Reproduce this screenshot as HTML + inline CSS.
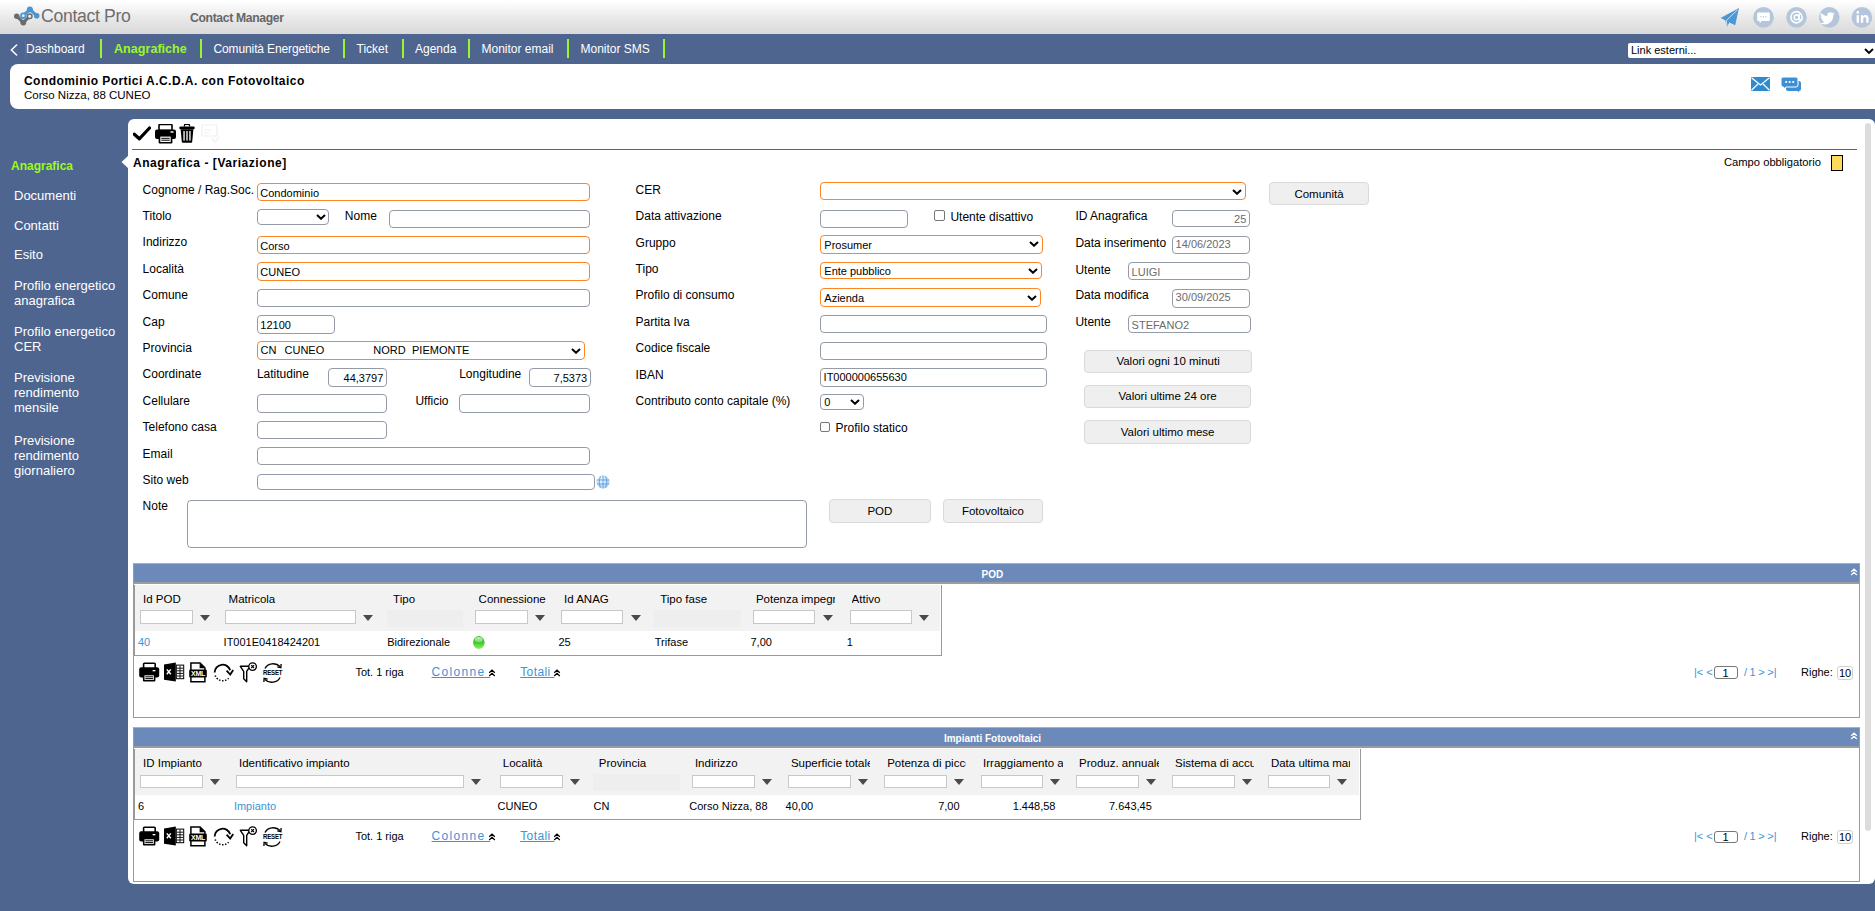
<!DOCTYPE html>
<html><head><meta charset="utf-8">
<style>
*{box-sizing:border-box;margin:0;padding:0}
html,body{width:1875px;height:911px;overflow:hidden}
body{position:relative;background:#4e6590;font-family:"Liberation Sans",sans-serif;color:#000}
.a{position:absolute;white-space:nowrap}
#hdr{position:absolute;left:0;top:0;width:1875px;height:34px;background:linear-gradient(#ffffff 0%,#fdfdfd 8%,#e8e8e8 55%,#d9d9d9 100%)}
.nav{position:absolute;top:42px;font-size:12px;color:#fff;line-height:14px;white-space:nowrap}
.sep{position:absolute;top:39px;width:2px;height:19px;background:#9bf826}
#card{position:absolute;left:10px;top:64px;width:1865px;height:45.3px;background:#fff;border-radius:8px 0 0 8px}
#main{position:absolute;left:128px;top:119px;width:1747px;height:765px;background:#fff;border-radius:6px}
.side{position:absolute;left:14px;font-size:13px;color:#fff;line-height:15px;white-space:nowrap}
.lbl{position:absolute;font-size:12px;line-height:14px;white-space:nowrap}
.in{position:absolute;border:1px solid #949aa6;border-radius:4px;background:#fff;font-size:11px;white-space:nowrap;overflow:hidden}
.in span{position:absolute;line-height:13px}
.or{border:1.5px solid #fd8524}
.ro{color:#6b6b6b}
.btn{position:absolute;background:#efefef;border:1px solid #dadada;border-radius:4px;font-size:11.5px;text-align:center;white-space:nowrap}
.btn span{position:absolute;left:0;right:0;line-height:13px}
.chev{position:absolute}
.cb{position:absolute;width:10px;height:10px;border:1px solid #767676;border-radius:2px;background:#fff}
.gh{position:absolute;font-size:11.5px;line-height:13px;white-space:nowrap;overflow:hidden}
.gd{position:absolute;font-size:11px;line-height:13px;white-space:nowrap}
.fi{position:absolute;height:13.5px;border:1px solid #c8c8c8;background:#fff}
.tri{position:absolute;width:0;height:0;border-left:5.5px solid transparent;border-right:5.5px solid transparent;border-top:6px solid #4a4a4a}
.gph{position:absolute;background:#eeeeee}
.lnk{color:#3d94d6}
</style></head><body>
<div id="hdr"></div>
<svg class="a" style="left:13px;top:6px" width="28" height="20" viewBox="0 0 28 20">
<path d="M3.7 10.2 L10.3 16.6 L16.7 10.3" fill="none" stroke="#6b6b6b" stroke-width="3" stroke-linejoin="round"/>
<circle cx="3.7" cy="10.2" r="2.7" fill="#6b6b6b"/>
<circle cx="10.3" cy="16.6" r="2.9" fill="#6b6b6b"/>
<path d="M10.3 9.7 L16.9 3.4 L23.7 9.7" fill="none" stroke="#4896d4" stroke-width="3" stroke-linejoin="round"/>
<circle cx="16.9" cy="3.4" r="3" fill="#4896d4"/>
<circle cx="23.7" cy="9.7" r="2.8" fill="#4896d4"/>
<circle cx="16.7" cy="10.3" r="2.3" fill="#f1f1f1" stroke="#6b6b6b" stroke-width="1.5"/>
<circle cx="10.3" cy="9.7" r="2.3" fill="#f1f1f1" stroke="#4896d4" stroke-width="1.8"/>
</svg>
<div class="a" style="left:41px;top:5px;font-size:17.6px;color:#6e6e6e;letter-spacing:-0.3px;line-height:22px">Contact Pro</div>
<div class="a" style="left:190px;top:10.5px;font-size:12.2px;font-weight:bold;color:#666;line-height:14px;letter-spacing:-0.35px">Contact Manager</div>
<svg class="a" style="left:1720px;top:7px" width="20" height="21" viewBox="0 0 20 21">
<path d="M19 1 L0.6 11 L5.2 13.2 L7 19.8 L9.3 15.6 L15.2 18.2 Z" fill="#4b98d6"/><path d="M17.5 2.8 L6.3 13.6 L7 19" fill="none" stroke="#cfe3f5" stroke-width="0.9"/>
</svg>
<svg class="a" style="left:1752px;top:6px" width="122" height="23" viewBox="0 0 122 23">
<circle cx="11.5" cy="11.4" r="10.3" fill="#b5c5db"/>
<path d="M6.2 6.5 h10.6 a1 1 0 0 1 1 1 v6.5 a1 1 0 0 1 -1 1 h-7 l-2.2 2.6 v-2.6 h-1.4 a1 1 0 0 1 -1 -1 v-6.5 a1 1 0 0 1 1 -1z" fill="#fff"/>
<circle cx="9" cy="10.7" r="0.7" fill="#b5c5db"/><circle cx="11.5" cy="10.7" r="0.7" fill="#b5c5db"/><circle cx="14" cy="10.7" r="0.7" fill="#b5c5db"/>
<circle cx="44.5" cy="11.4" r="10.3" fill="#b5c5db"/>
<path d="M49.6 13.6 A5.6 5.6 0 1 1 50.1 11.2 V12.6 A1.5 1.5 0 0 1 47.1 12.6 V8.6" fill="none" stroke="#fff" stroke-width="1.6" stroke-linecap="round"/>
<circle cx="44.5" cy="11.4" r="2.3" fill="none" stroke="#fff" stroke-width="1.5"/>
<circle cx="77.3" cy="11.4" r="10.3" fill="#b5c5db"/>
<path d="M83 7.5 c-0.6 0.3 -1.2 0.4 -1.8 0.5 c0.6 -0.4 1.1 -1 1.3 -1.7 c-0.6 0.4 -1.3 0.6 -2 0.8 c-1.2 -1.3 -3.3 -1.3 -4.4 0 c-0.8 0.8 -1 1.9 -0.8 2.9 c-2.5 -0.1 -4.8 -1.3 -6.3 -3.2 c-0.8 1.4 -0.4 3.2 0.9 4.1 c-0.5 0 -1 -0.2 -1.4 -0.4 c0 1.5 1 2.7 2.5 3 c-0.5 0.1 -0.9 0.2 -1.4 0.1 c0.4 1.2 1.6 2.1 2.9 2.1 c-1.3 1 -3 1.5 -4.6 1.3 c6.2 3.8 13.9 -0.4 13.4 -7.9 c0.6 -0.4 1.1 -1 1.5 -1.6z" fill="#fff"/>
<circle cx="109.9" cy="11.4" r="10.3" fill="#b5c5db"/>
<rect x="104.6" y="9.2" width="2.4" height="7.6" fill="#fff"/>
<circle cx="105.8" cy="6.4" r="1.4" fill="#fff"/>
<path d="M108.8 9.2 h2.3 v1.1 c0.5 -0.8 1.4 -1.3 2.6 -1.3 c2 0 2.9 1.2 2.9 3.5 v4.3 h-2.4 v-3.9 c0 -1.1 -0.4 -1.7 -1.3 -1.7 c-1 0 -1.7 0.7 -1.7 1.9 v3.7 h-2.4z" fill="#fff"/>
</svg>
<svg class="a" style="left:10px;top:44px" width="8" height="12" viewBox="0 0 8 12"><path d="M6.6 1 L1.4 6 L6.6 11" fill="none" stroke="#fff" stroke-width="1.5" stroke-linecap="round"/></svg>
<div class="a" style="left:25px;top:41px;width:1px;height:18px;background:#5a709a"></div>
<div class="nav" style="left:26px">Dashboard</div>
<div class="sep" style="left:100px"></div>
<div class="nav" style="left:114px;font-weight:bold;color:#9bf826;font-size:12.6px;top:41.5px">Anagrafiche</div>
<div class="sep" style="left:199.5px"></div>
<div class="nav" style="left:213.5px;letter-spacing:-0.12px">Comunità Energetiche</div>
<div class="sep" style="left:343px"></div>
<div class="nav" style="left:356.5px">Ticket</div>
<div class="sep" style="left:402px"></div>
<div class="nav" style="left:415px">Agenda</div>
<div class="sep" style="left:468px"></div>
<div class="nav" style="left:481.5px">Monitor email</div>
<div class="sep" style="left:567px"></div>
<div class="nav" style="left:580.5px">Monitor SMS</div>
<div class="sep" style="left:662.5px"></div>
<div class="a" style="left:1628px;top:43px;width:260px;height:14.5px;background:#fff;border-radius:2px"></div>
<div class="a" style="left:1631px;top:44px;font-size:11px;line-height:13px">Link esterni...</div>
<svg class="a" style="left:1863.5px;top:47.5px" width="10" height="7" viewBox="0 0 10 7"><path d="M1 1 L5 5 L9 1" fill="none" stroke="#000" stroke-width="1.9"/></svg>
<div id="card"></div>
<div class="a" style="left:24px;top:74px;font-size:12px;font-weight:bold;letter-spacing:0.45px;line-height:14px">Condominio Portici A.C.D.A. con Fotovoltaico</div>
<div class="a" style="left:24px;top:88px;font-size:11.5px;line-height:14px">Corso Nizza, 88 CUNEO</div>
<svg class="a" style="left:1751px;top:77px" width="19" height="14" viewBox="0 0 19 14">
<rect x="0" y="0" width="19" height="14" fill="#2f8bd0"/>
<path d="M0.5 0.8 L9.5 8 L18.5 0.8 M0.5 13.2 L7 7 M18.5 13.2 L12 7" fill="none" stroke="#fff" stroke-width="1.3"/>
</svg>
<svg class="a" style="left:1781px;top:77px" width="20" height="15" viewBox="0 0 20 15">
<path d="M5 4 h13 a2 2 0 0 1 2 2 v6 a2 2 0 0 1 -2 2 v1.3 l-1.5 -1.3 h-9.5 a2 2 0 0 1 -2 -2z" fill="#3d8fd3"/>
<path d="M2 0 h13 a2 2 0 0 1 2 2 v6 a2 2 0 0 1 -2 2 h-10 l-2.5 2 v-2 h-0.5 a2 2 0 0 1 -2 -2 v-6 a2 2 0 0 1 2 -2z" fill="#3d8fd3" stroke="#fff" stroke-width="1"/>
<circle cx="5.2" cy="5" r="1.1" fill="#fff"/><circle cx="8.7" cy="5" r="1.1" fill="#fff"/><circle cx="12.2" cy="5" r="1.1" fill="#fff"/>
</svg>
<div id="main"></div>
<svg class="a" style="left:121px;top:155px" width="8" height="14" viewBox="0 0 8 14"><path d="M8 0 L0.5 7 L8 14 Z" fill="#fff"/></svg>
<div class="a" style="left:1865px;top:123px;width:6px;height:708px;background:#dcdcdc;border-radius:3px"></div>
<div class="side" style="left:11px;top:158.5px;font-weight:bold;color:#9bf826;font-size:12px">Anagrafica</div>
<div class="side" style="top:187.6px">Documenti</div>
<div class="side" style="top:217.5px">Contatti</div>
<div class="side" style="top:247.3px">Esito</div>
<div class="side" style="top:277.8px">Profilo energetico<br>anagrafica</div>
<div class="side" style="top:324.2px">Profilo energetico<br>CER</div>
<div class="side" style="top:369.7px">Previsione<br>rendimento<br>mensile</div>
<div class="side" style="top:432.7px">Previsione<br>rendimento<br>giornaliero</div>
<svg class="a" style="left:133px;top:126px" width="18" height="15" viewBox="0 0 18 15"><path d="M1.3 8.2 L6.3 12.8 L16.5 2" fill="none" stroke="#000" stroke-width="3.2" stroke-linecap="round" stroke-linejoin="round"/></svg>
<svg class="a" style="left:155px;top:123.5px" width="21" height="20" viewBox="0 0 21 20">
<rect x="4" y="0.5" width="13" height="6" rx="1" fill="none" stroke="#000" stroke-width="1.6"/>
<rect x="0" y="5.5" width="21" height="9.5" rx="2" fill="#000"/>
<rect x="15.5" y="7.3" width="3" height="1.4" fill="#fff"/>
<rect x="3.6" y="11" width="13.8" height="8.6" rx="1" fill="#000"/>
<rect x="5.3" y="12.6" width="10.4" height="5.4" fill="#fff"/>
<rect x="6.3" y="13.8" width="8.4" height="1" fill="#000"/><rect x="6.3" y="15.7" width="8.4" height="1" fill="#000"/>
</svg>
<svg class="a" style="left:178.5px;top:124px" width="16" height="19" viewBox="0 0 16 19">
<path d="M5.5 2.4 V1.2 a0.8 0.8 0 0 1 0.8 -0.8 h3.4 a0.8 0.8 0 0 1 0.8 0.8 V2.4" fill="none" stroke="#000" stroke-width="1.3"/>
<rect x="0.3" y="2.6" width="15.4" height="2.6" rx="1.2" fill="#000"/>
<path d="M1.6 5.2 h12.8 l-1.2 12.6 a1 1 0 0 1 -1 0.9 h-8.4 a1 1 0 0 1 -1 -0.9z" fill="#000"/>
<rect x="4.4" y="7" width="1.3" height="9.6" fill="#fff"/><rect x="7.35" y="7" width="1.3" height="9.6" fill="#fff"/><rect x="10.3" y="7" width="1.3" height="9.6" fill="#fff"/>
</svg>
<svg class="a" style="left:201px;top:124px" width="19" height="19" viewBox="0 0 19 19" opacity="0.06">
<rect x="1" y="1" width="15" height="11" rx="1" fill="none" stroke="#000" stroke-width="1.2"/>
<path d="M3 6 h8 M3 9 h6 M11 15 l3 3 l4 -5" fill="none" stroke="#000" stroke-width="1.2"/>
</svg>
<div class="a" style="left:132px;top:149px;width:1725px;height:1.4px;background:#4e6590"></div>
<div class="lbl" style="left:133px;top:156.1px;font-weight:bold;letter-spacing:0.55px">Anagrafica - [Variazione]</div>
<div class="lbl" style="left:1724px;top:155px;font-size:11.2px">Campo obbligatorio</div>
<div class="a" style="left:1831px;top:155px;width:12px;height:16px;background:#ffd95a;border:1px solid #000"></div>
<div class="lbl" style="left:142.6px;top:182.6px;">Cognome / Rag.Soc.</div>
<div class="lbl" style="left:142.6px;top:209px;">Titolo</div>
<div class="lbl" style="left:142.6px;top:235.4px;">Indirizzo</div>
<div class="lbl" style="left:142.6px;top:261.8px;">Località</div>
<div class="lbl" style="left:142.6px;top:288.2px;">Comune</div>
<div class="lbl" style="left:142.6px;top:314.6px;">Cap</div>
<div class="lbl" style="left:142.6px;top:341px;">Provincia</div>
<div class="lbl" style="left:142.6px;top:367.4px;">Coordinate</div>
<div class="lbl" style="left:142.6px;top:393.8px;">Cellulare</div>
<div class="lbl" style="left:142.6px;top:420.2px;">Telefono casa</div>
<div class="lbl" style="left:142.6px;top:446.6px;">Email</div>
<div class="lbl" style="left:142.6px;top:473px;">Sito web</div>
<div class="lbl" style="left:142.6px;top:499.4px;">Note</div>
<div class="in or" style="left:257px;top:183.3px;width:333px;height:18.2px;border-radius:4px"></div>
<div class="a" style="left:260.3px;top:186.8px;font-size:11px;line-height:13px;">Condominio</div>
<div class="in" style="left:257px;top:209.3px;width:72px;height:15.5px;border-radius:4px"></div>
<svg class="chev" style="left:315.5px;top:214.25px" width="10" height="6" viewBox="0 0 10 6"><path d="M1 1 L5 4.7 L9 1" fill="none" stroke="#000" stroke-width="2.05"/></svg>
<div class="lbl" style="left:344.8px;top:209.2px;">Nome</div>
<div class="in" style="left:389.3px;top:210.4px;width:200.7px;height:17.2px;border-radius:4px"></div>
<div class="in or" style="left:257px;top:236.2px;width:333px;height:18.2px;border-radius:4px"></div>
<div class="a" style="left:260.3px;top:239.7px;font-size:11px;line-height:13px;">Corso</div>
<div class="in or" style="left:257px;top:262.4px;width:333px;height:18.3px;border-radius:4px"></div>
<div class="a" style="left:260.3px;top:265.95px;font-size:11px;line-height:13px;">CUNEO</div>
<div class="in" style="left:257px;top:288.9px;width:333px;height:18.5px;border-radius:4px"></div>
<div class="in" style="left:257px;top:315.2px;width:78px;height:18.4px;border-radius:4px"></div>
<div class="a" style="left:260.3px;top:318.8px;font-size:11px;line-height:13px;">12100</div>
<div class="in or" style="left:257px;top:341.1px;width:327.5px;height:18.5px;border-radius:4px"></div>
<svg class="chev" style="left:571px;top:347.55px" width="10" height="6" viewBox="0 0 10 6"><path d="M1 1 L5 4.7 L9 1" fill="none" stroke="#000" stroke-width="2.05"/></svg>
<div class="a" style="left:260.5px;top:344.25px;font-size:11px;line-height:13px;">CN</div>
<div class="a" style="left:284.5px;top:344.25px;font-size:11px;line-height:13px;">CUNEO</div>
<div class="a" style="left:373.3px;top:344.25px;font-size:11px;line-height:13px;">NORD</div>
<div class="a" style="left:412px;top:344.25px;font-size:11px;line-height:13px;">PIEMONTE</div>
<div class="lbl" style="left:256.9px;top:367.4px;">Latitudine</div>
<div class="in" style="left:327.5px;top:368.2px;width:59.3px;height:18.5px;border-radius:4px"></div>
<div class="a" style="right:1491.7px;top:371.85px;font-size:11px;line-height:13px;">44,3797</div>
<div class="lbl" style="left:459.2px;top:367.4px;">Longitudine</div>
<div class="in" style="left:529.3px;top:368.2px;width:61.4px;height:18.5px;border-radius:4px"></div>
<div class="a" style="right:1287.8px;top:371.85px;font-size:11px;line-height:13px;">7,5373</div>
<div class="in" style="left:257px;top:394.2px;width:130px;height:18.4px;border-radius:4px"></div>
<div class="lbl" style="left:415.4px;top:393.8px;">Ufficio</div>
<div class="in" style="left:459.2px;top:394.2px;width:130.8px;height:18.4px;border-radius:4px"></div>
<div class="in" style="left:257px;top:420.8px;width:130px;height:18.3px;border-radius:4px"></div>
<div class="in" style="left:257px;top:447.4px;width:333px;height:18.1px;border-radius:4px"></div>
<div class="in" style="left:257px;top:474.2px;width:338px;height:15.5px;border-radius:4px"></div>
<svg class="a" style="left:596px;top:474.5px" width="14" height="14" viewBox="0 0 14 14">
<defs><radialGradient id="gl" cx="0.4" cy="0.35" r="0.7"><stop offset="0" stop-color="#f4faff"/><stop offset="1" stop-color="#a6d0f0"/></radialGradient></defs>
<circle cx="7" cy="7" r="6.5" fill="url(#gl)"/>
<path d="M0.8 5 h12.4 M0.8 9 h12.4 M7 0.5 v13 M4.3 1.2 q-2.2 5.8 0 11.6 M9.7 1.2 q2.2 5.8 0 11.6" fill="none" stroke="#5b9ad6" stroke-width="0.85"/>
</svg>
<div class="in" style="left:186.5px;top:500.4px;width:620.3px;height:47.9px;border-radius:4px"></div>
<div class="lbl" style="left:635.6px;top:182.8px;">CER</div>
<div class="lbl" style="left:635.6px;top:209.2px;">Data attivazione</div>
<div class="lbl" style="left:635.6px;top:235.6px;">Gruppo</div>
<div class="lbl" style="left:635.6px;top:262px;">Tipo</div>
<div class="lbl" style="left:635.6px;top:288.4px;">Profilo di consumo</div>
<div class="lbl" style="left:635.6px;top:314.8px;">Partita Iva</div>
<div class="lbl" style="left:635.6px;top:341.2px;">Codice fiscale</div>
<div class="lbl" style="left:635.6px;top:367.6px;">IBAN</div>
<div class="lbl" style="left:635.6px;top:394px;">Contributo conto capitale (%)</div>
<div class="in or" style="left:820.3px;top:182.1px;width:425.3px;height:18.4px;border-radius:4px"></div>
<svg class="chev" style="left:1232.1px;top:188.5px" width="10" height="6" viewBox="0 0 10 6"><path d="M1 1 L5 4.7 L9 1" fill="none" stroke="#000" stroke-width="2.05"/></svg>
<div class="in" style="left:820.3px;top:210.3px;width:87.4px;height:17.3px;border-radius:4px"></div>
<div class="cb" style="left:934px;top:210.3px;width:10.5px;height:10.4px"></div>
<div class="lbl" style="left:950.4px;top:209.7px;">Utente disattivo</div>
<div class="in or" style="left:820.3px;top:235px;width:222.4px;height:18.5px;border-radius:4px"></div>
<div class="a" style="left:824.3px;top:238.65px;font-size:11px;line-height:13px;">Prosumer</div>
<svg class="chev" style="left:1029.2px;top:241.45px" width="10" height="6" viewBox="0 0 10 6"><path d="M1 1 L5 4.7 L9 1" fill="none" stroke="#000" stroke-width="2.05"/></svg>
<div class="in or" style="left:820.3px;top:262.1px;width:221.5px;height:17.3px;border-radius:4px"></div>
<div class="a" style="left:824.3px;top:265.15px;font-size:11px;line-height:13px;">Ente pubblico</div>
<svg class="chev" style="left:1028.3px;top:267.95px" width="10" height="6" viewBox="0 0 10 6"><path d="M1 1 L5 4.7 L9 1" fill="none" stroke="#000" stroke-width="2.05"/></svg>
<div class="in or" style="left:820.3px;top:288.3px;width:220.4px;height:18.3px;border-radius:4px"></div>
<div class="a" style="left:824.3px;top:291.85px;font-size:11px;line-height:13px;">Azienda</div>
<svg class="chev" style="left:1027.2px;top:294.65px" width="10" height="6" viewBox="0 0 10 6"><path d="M1 1 L5 4.7 L9 1" fill="none" stroke="#000" stroke-width="2.05"/></svg>
<div class="in" style="left:820.3px;top:315.1px;width:226.4px;height:18.3px;border-radius:4px"></div>
<div class="in" style="left:820.3px;top:342px;width:226.4px;height:17.5px;border-radius:4px"></div>
<div class="in" style="left:820.3px;top:368px;width:226.4px;height:18.5px;border-radius:4px"></div>
<div class="a" style="left:823.6px;top:370.95px;font-size:11px;line-height:13px;">IT000000655630</div>
<div class="in" style="left:820.3px;top:394.2px;width:43.4px;height:15.4px;border-radius:4px"></div>
<div class="a" style="left:824.3px;top:396.3px;font-size:11px;line-height:13px;">0</div>
<svg class="chev" style="left:850.2px;top:399.1px" width="10" height="6" viewBox="0 0 10 6"><path d="M1 1 L5 4.7 L9 1" fill="none" stroke="#000" stroke-width="2.05"/></svg>
<div class="cb" style="left:820.3px;top:422.3px;width:9.7px;height:9.5px"></div>
<div class="lbl" style="left:835.6px;top:420.6px;">Profilo statico</div>
<div class="btn" style="left:829px;top:499.4px;width:101.8px;height:23.3px"></div>
<div class="a" style="left:829px;width:101.8px;text-align:center;top:504.85px;font-size:11.5px;line-height:13px">POD</div>
<div class="btn" style="left:943.3px;top:499.4px;width:99.3px;height:23.3px"></div>
<div class="a" style="left:943.3px;width:99.3px;text-align:center;top:504.85px;font-size:11.5px;line-height:13px">Fotovoltaico</div>
<div class="lbl" style="left:1075.4px;top:209.2px;">ID Anagrafica</div>
<div class="in" style="left:1172.3px;top:210.3px;width:77.5px;height:17.2px;border-radius:4px"></div>
<div class="a" style="right:628.7px;top:213.3px;font-size:11px;line-height:13px;color:#6b6b6b;">25</div>
<div class="lbl" style="left:1075.4px;top:235.5px;">Data inserimento</div>
<div class="in" style="left:1172.3px;top:236.2px;width:77.7px;height:18.1px;border-radius:4px"></div>
<div class="a" style="left:1175.6px;top:238.45px;font-size:11px;line-height:13px;color:#6b6b6b;">14/06/2023</div>
<div class="lbl" style="left:1075.4px;top:262.5px;">Utente</div>
<div class="in" style="left:1128.3px;top:262.3px;width:121.7px;height:18.1px;border-radius:4px"></div>
<div class="a" style="left:1131.6px;top:265.75px;font-size:11px;line-height:13px;color:#6b6b6b;">LUIGI</div>
<div class="lbl" style="left:1075.4px;top:288.4px;">Data modifica</div>
<div class="in" style="left:1172.3px;top:289.1px;width:77.7px;height:18.5px;border-radius:4px"></div>
<div class="a" style="left:1175.6px;top:291.35px;font-size:11px;line-height:13px;color:#6b6b6b;">30/09/2025</div>
<div class="lbl" style="left:1075.4px;top:315.1px;">Utente</div>
<div class="in" style="left:1128.3px;top:315.3px;width:122.4px;height:18.2px;border-radius:4px"></div>
<div class="a" style="left:1131.6px;top:318.8px;font-size:11px;line-height:13px;color:#6b6b6b;">STEFANO2</div>
<div class="btn" style="left:1084.3px;top:350.3px;width:167.5px;height:22.3px"></div>
<div class="a" style="left:1084.3px;width:167.5px;text-align:center;top:355.25px;font-size:11.5px;line-height:13px">Valori ogni 10 minuti</div>
<div class="btn" style="left:1084.3px;top:385.3px;width:166.5px;height:22.3px"></div>
<div class="a" style="left:1084.3px;width:166.5px;text-align:center;top:390.25px;font-size:11.5px;line-height:13px">Valori ultime 24 ore</div>
<div class="btn" style="left:1084.3px;top:420.3px;width:166.7px;height:23.3px"></div>
<div class="a" style="left:1084.3px;width:166.7px;text-align:center;top:425.75px;font-size:11.5px;line-height:13px">Valori ultimo mese</div>
<div class="btn" style="left:1269.2px;top:182.2px;width:99.6px;height:23.2px"></div>
<div class="a" style="left:1269.2px;width:99.6px;text-align:center;top:187.6px;font-size:11.5px;line-height:13px">Comunità</div>
<div class="a" style="left:133px;top:563px;width:1727px;height:154.5px;border:1px solid #9a9a9a;border-top-color:#b0b0b0"></div>
<div class="a" style="left:134px;top:564px;width:1725px;height:18px;background:#6b8aba"></div>
<div class="a" style="left:134px;top:582px;width:1725px;height:2.2px;background:#9a9ca2"></div>
<div class="a" style="left:981.6px;top:568.5px;font-size:10px;font-weight:bold;color:#fff;line-height:12px">POD</div>
<svg class="a" style="left:1849.5px;top:567.6px" width="8" height="8" viewBox="0 0 8 8"><path d="M1.2 3.8 L4 1.2 L6.8 3.8 M1.2 7 L4 4.4 L6.8 7" fill="none" stroke="#fff" stroke-width="1.25"/></svg>
<div class="a" style="left:133px;top:585px;width:808.6px;height:70.8px;border:1.5px solid #9a9a9a;border-top:0;border-left-width:2px;background:#fff"></div>
<div class="a" style="left:135px;top:585px;width:805.1px;height:45.6px;background:#f2f2f2"></div>
<div class="gh" style="left:143px;top:592.6px;width:69.4px">Id POD</div>
<div class="fi" style="left:140px;top:610.4px;width:52.6px"></div>
<div class="tri" style="left:199.8px;top:615.2px"></div>
<div class="gh" style="left:228.6px;top:592.6px;width:146.9px">Matricola</div>
<div class="fi" style="left:225px;top:610.4px;width:130.7px"></div>
<div class="tri" style="left:362.9px;top:615.2px"></div>
<div class="gh" style="left:393.1px;top:592.6px;width:89.6px">Tipo</div>
<div class="gph" style="left:386.7px;top:610px;width:76.2px;height:17px"></div>
<div class="gh" style="left:478.6px;top:592.6px;width:69px">Connessione</div>
<div class="fi" style="left:475.3px;top:610.4px;width:52.5px"></div>
<div class="tri" style="left:535px;top:615.2px"></div>
<div class="gh" style="left:564px;top:592.6px;width:79.3px">Id ANAG</div>
<div class="fi" style="left:561.4px;top:610.4px;width:62.1px"></div>
<div class="tri" style="left:630.7px;top:615.2px"></div>
<div class="gh" style="left:660.2px;top:592.6px;width:100.8px">Tipo fase</div>
<div class="gph" style="left:654px;top:610px;width:87.2px;height:17px"></div>
<div class="gh" style="left:755.9px;top:592.6px;width:79.2px">Potenza impegnata</div>
<div class="fi" style="left:753.4px;top:610.4px;width:61.9px"></div>
<div class="tri" style="left:822.5px;top:615.2px"></div>
<div class="gh" style="left:851.6px;top:592.6px;width:79.9px">Attivo</div>
<div class="fi" style="left:849.6px;top:610.4px;width:62.1px"></div>
<div class="tri" style="left:918.9px;top:615.2px"></div>
<div class="gd lnk" style="left:137.9px;top:636.4px">40</div>
<div class="gd" style="left:223.6px;top:636.4px">IT001E0418424201</div>
<div class="gd" style="left:387.2px;top:636.4px">Bidirezionale</div>
<div class="gd" style="left:558.5px;top:636.4px">25</div>
<div class="gd" style="left:654.8px;top:636.4px">Trifase</div>
<div class="gd" style="left:750.5px;top:636.4px">7,00</div>
<div class="gd" style="left:846.7px;top:636.4px">1</div>
<svg class="a" style="left:138.6px;top:661.6px" width="146" height="21" viewBox="0 0 146 21">
<g transform="translate(0,0)">
<rect x="4.6" y="1.2" width="11.6" height="5.6" rx="0.8" fill="#fff" stroke="#000" stroke-width="1.6"/>
<rect x="0.2" y="5.2" width="20" height="10.2" rx="2" fill="#000"/>
<rect x="13.6" y="8" width="2.8" height="1.3" fill="#fff"/>
<rect x="3.9" y="12" width="12.5" height="7.6" rx="1" fill="#000"/>
<rect x="5.5" y="13.3" width="9.3" height="4.6" fill="#fff"/>
<rect x="6.3" y="14.3" width="7.7" height="1" fill="#000"/><rect x="6.3" y="16.1" width="7.7" height="1" fill="#000"/>
</g>
<g transform="translate(25,0)">
<path d="M0 2.5 L11.8 0.5 V19.5 L0 17.8z" fill="#000"/>
<path d="M2.8 7.4 L6.8 12.3 M6.8 7.4 L2.8 12.3" stroke="#fff" stroke-width="1.5"/>
<rect x="11.8" y="2.6" width="8.4" height="14.6" fill="#000"/>
<rect x="12.8" y="3.6" width="6.4" height="12.6" fill="#fff"/>
<path d="M12.8 6.2 h6.4 M12.8 8.8 h6.4 M12.8 11.4 h6.4 M12.8 14 h6.4 M16 3.6 v12.6" stroke="#000" stroke-width="0.9"/>
</g>
<g transform="translate(50,0)">
<path d="M1.9 0.9 H11 L15.9 5.8 V19.8 H1.9z" fill="#fff" stroke="#000" stroke-width="1.5"/>
<path d="M10.6 0.9 V6.2 H15.9z" fill="#000"/>
<rect x="0.2" y="7.5" width="17.6" height="8" rx="1.2" fill="#000"/>
<text x="9" y="14" font-family="Liberation Sans" font-weight="bold" font-size="7" fill="#fff" text-anchor="middle" letter-spacing="-0.3">XML</text>
</g>
<g transform="translate(74,0)">
<path d="M1.6 10.5 A8 8 0 0 1 17.2 8.2" fill="none" stroke="#000" stroke-width="1.8"/>
<path d="M13.6 8.6 L17.2 12.6 L20.2 8" fill="none" stroke="#000" stroke-width="1.8"/>
<path d="M2.2 13.5 A8 8 0 0 0 15.6 16.2" fill="none" stroke="#000" stroke-width="1.6" stroke-dasharray="1.4 1.6"/>
</g>
<g transform="translate(100.5,0)">
<path d="M0.8 4.3 H10.5 L7.2 9.3 V19.8 L4.2 16.8 V9.3z" fill="#fff" stroke="#000" stroke-width="1.4" stroke-linejoin="round"/>
<circle cx="13.1" cy="4.6" r="3.8" fill="#fff" stroke="#000" stroke-width="1.3"/>
<path d="M11.7 3.2 L14.5 6 M14.5 3.2 L11.7 6" stroke="#000" stroke-width="1.1"/>
</g>
<g transform="translate(123.5,0)">
<path d="M2.5 6.5 A9 8 0 0 1 17.5 4.5" fill="none" stroke="#000" stroke-width="1.4"/>
<path d="M14.8 4.8 L18.4 5.6 L18.6 2" fill="none" stroke="#000" stroke-width="1.3"/>
<text x="10.2" y="12.9" font-family="Liberation Sans" font-weight="bold" font-size="6.4" fill="#000" text-anchor="middle" letter-spacing="-0.2" transform="translate(10.2,0) scale(0.95,1.0) translate(-10.2,0)">RESET</text>
<path d="M17.5 15.5 A9 8 0 0 1 2.5 17.5" fill="none" stroke="#000" stroke-width="1.4"/>
<path d="M5.2 17.2 L1.6 16.4 L1.4 20" fill="none" stroke="#000" stroke-width="1.3"/>
</g>
</svg>
<div class="gd" style="left:355.4px;top:665.8px">Tot. 1 riga</div>
<div class="a lnk" style="left:431.6px;top:665.2px;font-size:12px;line-height:14px;letter-spacing:1.3px;text-decoration:underline">Colonne&nbsp;</div>
<svg class="a" style="left:487.5px;top:669.2px" width="8" height="8" viewBox="0 0 8 8"><path d="M1.2 3.8 L4 1.2 L6.8 3.8 M1.2 7 L4 4.4 L6.8 7" fill="none" stroke="#000" stroke-width="1.25"/></svg>
<div class="a lnk" style="left:520.2px;top:665.2px;font-size:12px;line-height:14px;letter-spacing:0.4px;text-decoration:underline">Totali&nbsp;</div>
<svg class="a" style="left:552.5px;top:669.2px" width="8" height="8" viewBox="0 0 8 8"><path d="M1.2 3.8 L4 1.2 L6.8 3.8 M1.2 7 L4 4.4 L6.8 7" fill="none" stroke="#000" stroke-width="1.25"/></svg>
<div class="gd lnk" style="left:1694px;top:665.8px">|&lt; &lt;</div>
<div class="a" style="left:1714px;top:666.4px;width:23.7px;height:12.3px;border:1px solid #777;border-radius:3px"></div>
<div class="gd" style="left:1722.6px;top:666.8px">1</div>
<div class="gd lnk" style="left:1744px;top:665.8px;word-spacing:-0.5px">/ 1 &gt; &gt;|</div>
<div class="gd" style="left:1801px;top:665.8px">Righe:</div>
<div class="a" style="left:1837.3px;top:666px;width:15.4px;height:13.6px;border:1px solid #d0d0d0;border-radius:3px"></div>
<div class="gd" style="left:1839px;top:666.5px">10</div>
<svg class="a" style="left:473.2px;top:635.9px" width="12" height="13" viewBox="0 0 12 13"><defs><linearGradient id="gb" x1="0" y1="0" x2="0" y2="1"><stop offset="0" stop-color="#44c535"/><stop offset="0.5" stop-color="#3fc82f"/><stop offset="1" stop-color="#90f060"/></linearGradient><linearGradient id="gh" x1="0" y1="0" x2="0" y2="1"><stop offset="0" stop-color="#c8ecc0"/><stop offset="1" stop-color="#7ad46a"/></linearGradient></defs><ellipse cx="5.8" cy="6.5" rx="5.8" ry="6.5" fill="url(#gb)"/><ellipse cx="5.8" cy="3.6" rx="3.9" ry="2.7" fill="url(#gh)"/></svg>
<div class="a" style="left:133px;top:727.1px;width:1727px;height:154.5px;border:1px solid #9a9a9a;border-top-color:#b0b0b0"></div>
<div class="a" style="left:134px;top:728.1px;width:1725px;height:18px;background:#6b8aba"></div>
<div class="a" style="left:134px;top:746.1px;width:1725px;height:2.2px;background:#9a9ca2"></div>
<div class="a" style="left:943.9px;top:732.6px;font-size:10px;font-weight:bold;color:#fff;line-height:12px">Impianti Fotovoltaici</div>
<svg class="a" style="left:1849.5px;top:731.7px" width="8" height="8" viewBox="0 0 8 8"><path d="M1.2 3.8 L4 1.2 L6.8 3.8 M1.2 7 L4 4.4 L6.8 7" fill="none" stroke="#fff" stroke-width="1.25"/></svg>
<div class="a" style="left:133px;top:749.1px;width:1227.6px;height:70.8px;border:1.5px solid #9a9a9a;border-top:0;border-left-width:2px;background:#fff"></div>
<div class="a" style="left:135px;top:749.1px;width:1224.1px;height:45.6px;background:#f2f2f2"></div>
<div class="gh" style="left:143.1px;top:756.7px;width:79.5px">ID Impianto</div>
<div class="fi" style="left:140.2px;top:774.5px;width:62.6px"></div>
<div class="tri" style="left:210px;top:779.3px"></div>
<div class="gh" style="left:239px;top:756.7px;width:244.7px">Identificativo impianto</div>
<div class="fi" style="left:236px;top:774.5px;width:227.9px"></div>
<div class="tri" style="left:471.1px;top:779.3px"></div>
<div class="gh" style="left:502.8px;top:756.7px;width:79.6px">Località</div>
<div class="fi" style="left:499.7px;top:774.5px;width:62.9px"></div>
<div class="tri" style="left:569.8px;top:779.3px"></div>
<div class="gh" style="left:598.8px;top:756.7px;width:101px">Provincia</div>
<div class="gph" style="left:592.6px;top:774.1px;width:87.4px;height:17px"></div>
<div class="gh" style="left:694.9px;top:756.7px;width:79.6px">Indirizzo</div>
<div class="fi" style="left:692px;top:774.5px;width:62.7px"></div>
<div class="tri" style="left:761.9px;top:779.3px"></div>
<div class="gh" style="left:790.9px;top:756.7px;width:79.5px">Superficie totale</div>
<div class="fi" style="left:788.2px;top:774.5px;width:62.4px"></div>
<div class="tri" style="left:857.8px;top:779.3px"></div>
<div class="gh" style="left:887.2px;top:756.7px;width:79.2px">Potenza di picco</div>
<div class="fi" style="left:884.2px;top:774.5px;width:62.4px"></div>
<div class="tri" style="left:953.8px;top:779.3px"></div>
<div class="gh" style="left:983.1px;top:756.7px;width:79.6px">Irraggiamento annuo</div>
<div class="fi" style="left:980.5px;top:774.5px;width:62.4px"></div>
<div class="tri" style="left:1050.1px;top:779.3px"></div>
<div class="gh" style="left:1079px;top:756.7px;width:79.6px">Produz. annuale</div>
<div class="fi" style="left:1076.4px;top:774.5px;width:62.4px"></div>
<div class="tri" style="left:1146px;top:779.3px"></div>
<div class="gh" style="left:1175px;top:756.7px;width:79.3px">Sistema di accumulo</div>
<div class="fi" style="left:1172px;top:774.5px;width:62.5px"></div>
<div class="tri" style="left:1241.7px;top:779.3px"></div>
<div class="gh" style="left:1270.9px;top:756.7px;width:79.1px">Data ultima manutenzione</div>
<div class="fi" style="left:1267.9px;top:774.5px;width:62.3px"></div>
<div class="tri" style="left:1337.4px;top:779.3px"></div>
<div class="gd" style="left:137.9px;top:800px">6</div>
<div class="gd lnk" style="left:233.9px;top:800px">Impianto</div>
<div class="gd" style="left:497.6px;top:800px">CUNEO</div>
<div class="gd" style="left:593.6px;top:800px">CN</div>
<div class="gd" style="left:689.3px;top:800px">Corso Nizza, 88</div>
<div class="gd" style="left:785.6px;top:800px">40,00</div>
<div class="gd" style="right:915.4px;top:800px">7,00</div>
<div class="gd" style="right:819.5px;top:800px">1.448,58</div>
<div class="gd" style="right:723.2px;top:800px">7.643,45</div>
<svg class="a" style="left:138.6px;top:825.7px" width="146" height="21" viewBox="0 0 146 21">
<g transform="translate(0,0)">
<rect x="4.6" y="1.2" width="11.6" height="5.6" rx="0.8" fill="#fff" stroke="#000" stroke-width="1.6"/>
<rect x="0.2" y="5.2" width="20" height="10.2" rx="2" fill="#000"/>
<rect x="13.6" y="8" width="2.8" height="1.3" fill="#fff"/>
<rect x="3.9" y="12" width="12.5" height="7.6" rx="1" fill="#000"/>
<rect x="5.5" y="13.3" width="9.3" height="4.6" fill="#fff"/>
<rect x="6.3" y="14.3" width="7.7" height="1" fill="#000"/><rect x="6.3" y="16.1" width="7.7" height="1" fill="#000"/>
</g>
<g transform="translate(25,0)">
<path d="M0 2.5 L11.8 0.5 V19.5 L0 17.8z" fill="#000"/>
<path d="M2.8 7.4 L6.8 12.3 M6.8 7.4 L2.8 12.3" stroke="#fff" stroke-width="1.5"/>
<rect x="11.8" y="2.6" width="8.4" height="14.6" fill="#000"/>
<rect x="12.8" y="3.6" width="6.4" height="12.6" fill="#fff"/>
<path d="M12.8 6.2 h6.4 M12.8 8.8 h6.4 M12.8 11.4 h6.4 M12.8 14 h6.4 M16 3.6 v12.6" stroke="#000" stroke-width="0.9"/>
</g>
<g transform="translate(50,0)">
<path d="M1.9 0.9 H11 L15.9 5.8 V19.8 H1.9z" fill="#fff" stroke="#000" stroke-width="1.5"/>
<path d="M10.6 0.9 V6.2 H15.9z" fill="#000"/>
<rect x="0.2" y="7.5" width="17.6" height="8" rx="1.2" fill="#000"/>
<text x="9" y="14" font-family="Liberation Sans" font-weight="bold" font-size="7" fill="#fff" text-anchor="middle" letter-spacing="-0.3">XML</text>
</g>
<g transform="translate(74,0)">
<path d="M1.6 10.5 A8 8 0 0 1 17.2 8.2" fill="none" stroke="#000" stroke-width="1.8"/>
<path d="M13.6 8.6 L17.2 12.6 L20.2 8" fill="none" stroke="#000" stroke-width="1.8"/>
<path d="M2.2 13.5 A8 8 0 0 0 15.6 16.2" fill="none" stroke="#000" stroke-width="1.6" stroke-dasharray="1.4 1.6"/>
</g>
<g transform="translate(100.5,0)">
<path d="M0.8 4.3 H10.5 L7.2 9.3 V19.8 L4.2 16.8 V9.3z" fill="#fff" stroke="#000" stroke-width="1.4" stroke-linejoin="round"/>
<circle cx="13.1" cy="4.6" r="3.8" fill="#fff" stroke="#000" stroke-width="1.3"/>
<path d="M11.7 3.2 L14.5 6 M14.5 3.2 L11.7 6" stroke="#000" stroke-width="1.1"/>
</g>
<g transform="translate(123.5,0)">
<path d="M2.5 6.5 A9 8 0 0 1 17.5 4.5" fill="none" stroke="#000" stroke-width="1.4"/>
<path d="M14.8 4.8 L18.4 5.6 L18.6 2" fill="none" stroke="#000" stroke-width="1.3"/>
<text x="10.2" y="12.9" font-family="Liberation Sans" font-weight="bold" font-size="6.4" fill="#000" text-anchor="middle" letter-spacing="-0.2" transform="translate(10.2,0) scale(0.95,1.0) translate(-10.2,0)">RESET</text>
<path d="M17.5 15.5 A9 8 0 0 1 2.5 17.5" fill="none" stroke="#000" stroke-width="1.4"/>
<path d="M5.2 17.2 L1.6 16.4 L1.4 20" fill="none" stroke="#000" stroke-width="1.3"/>
</g>
</svg>
<div class="gd" style="left:355.4px;top:829.9px">Tot. 1 riga</div>
<div class="a lnk" style="left:431.6px;top:829.3px;font-size:12px;line-height:14px;letter-spacing:1.3px;text-decoration:underline">Colonne&nbsp;</div>
<svg class="a" style="left:487.5px;top:833.3px" width="8" height="8" viewBox="0 0 8 8"><path d="M1.2 3.8 L4 1.2 L6.8 3.8 M1.2 7 L4 4.4 L6.8 7" fill="none" stroke="#000" stroke-width="1.25"/></svg>
<div class="a lnk" style="left:520.2px;top:829.3px;font-size:12px;line-height:14px;letter-spacing:0.4px;text-decoration:underline">Totali&nbsp;</div>
<svg class="a" style="left:552.5px;top:833.3px" width="8" height="8" viewBox="0 0 8 8"><path d="M1.2 3.8 L4 1.2 L6.8 3.8 M1.2 7 L4 4.4 L6.8 7" fill="none" stroke="#000" stroke-width="1.25"/></svg>
<div class="gd lnk" style="left:1694px;top:829.9px">|&lt; &lt;</div>
<div class="a" style="left:1714px;top:830.5px;width:23.7px;height:12.3px;border:1px solid #777;border-radius:3px"></div>
<div class="gd" style="left:1722.6px;top:830.9px">1</div>
<div class="gd lnk" style="left:1744px;top:829.9px;word-spacing:-0.5px">/ 1 &gt; &gt;|</div>
<div class="gd" style="left:1801px;top:829.9px">Righe:</div>
<div class="a" style="left:1837.3px;top:830.1px;width:15.4px;height:13.6px;border:1px solid #d0d0d0;border-radius:3px"></div>
<div class="gd" style="left:1839px;top:830.6px">10</div>
</body></html>
